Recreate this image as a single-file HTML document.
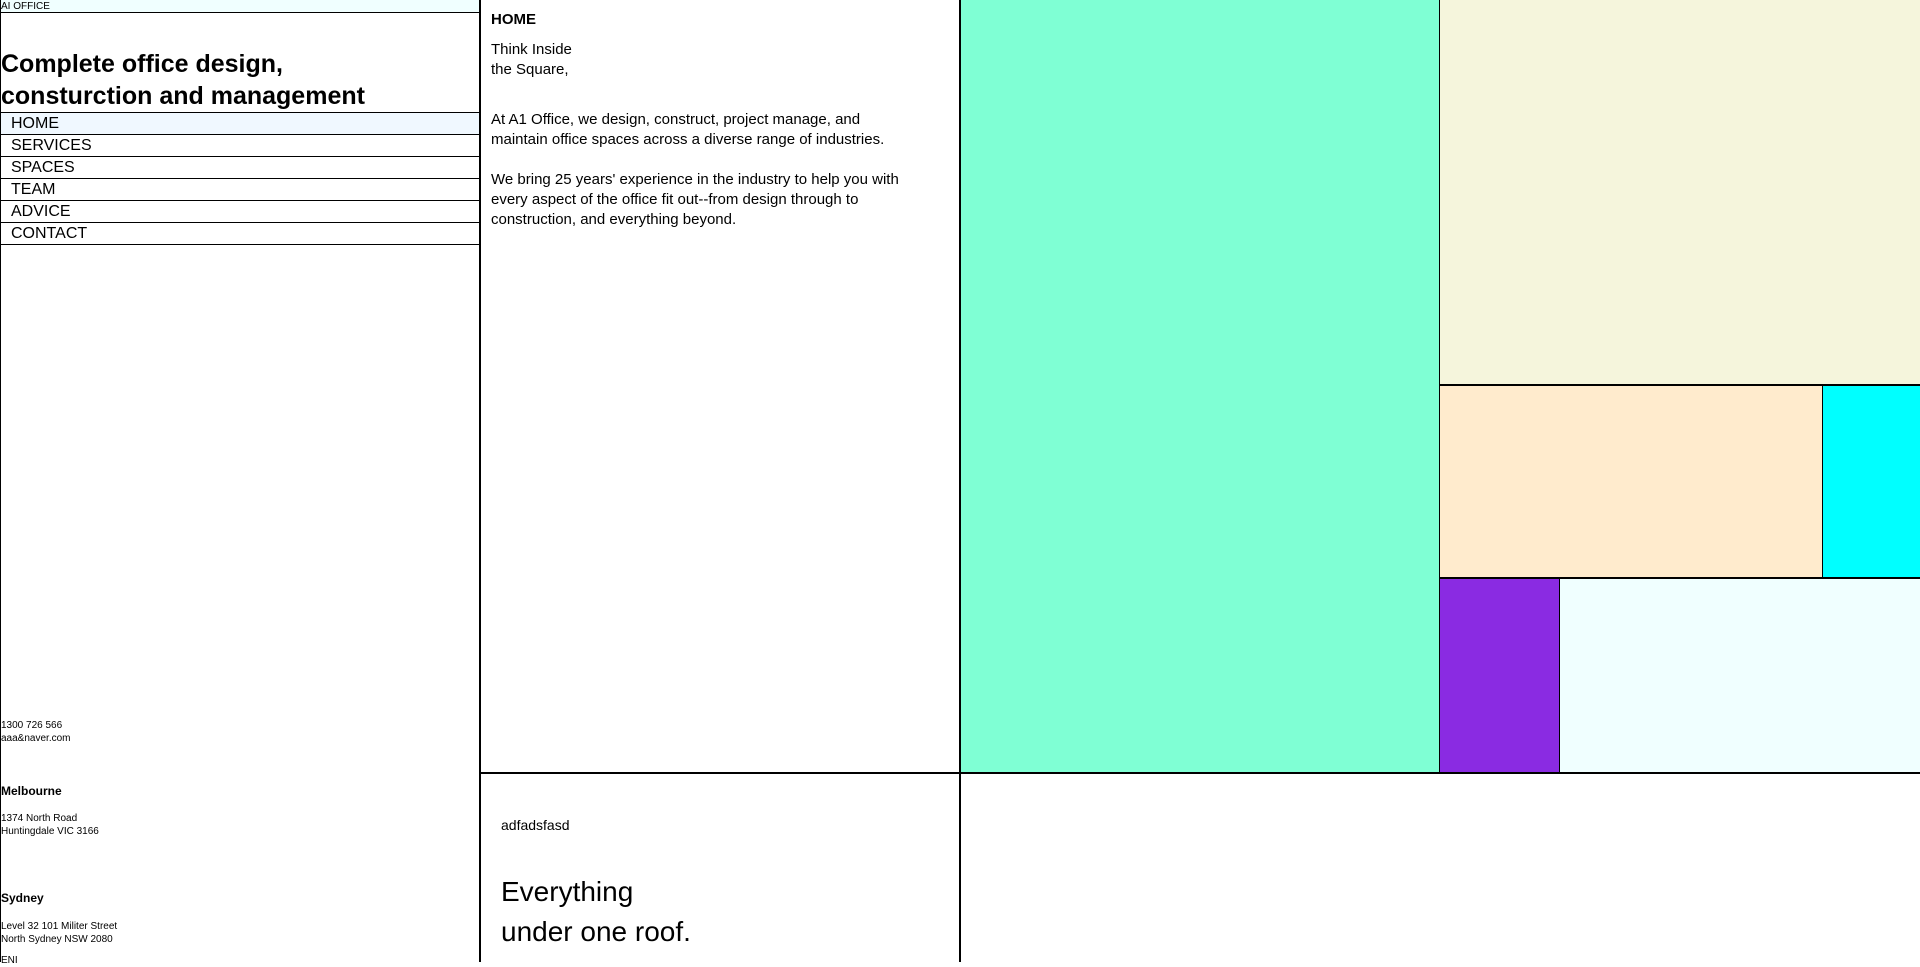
<!DOCTYPE html>
<html><head><meta charset="utf-8"><style>
*{margin:0;padding:0;box-sizing:border-box}
body{width:1920px;height:962px;overflow:hidden;background:#fff;font-family:"Liberation Sans","Noto Sans CJK KR",sans-serif;color:#000;position:relative}
.a{position:absolute}
.nav div{height:22px;border-bottom:1.5px solid #000;font-size:16px;line-height:22px;padding-left:10px}
.sm{font-size:10px;line-height:13px}
.mid{font-size:15px;line-height:20px}
</style></head><body>
<div class="a" style="left:0;top:0;width:481px;height:962px;border-left:1px solid #000;border-right:2px solid #000"></div>
<div class="a sm" style="left:1px;top:0;width:478px;height:13px;background:#f0ffff;border-bottom:1.5px solid #000;line-height:13px;font-size:10px">AI OFFICE</div>
<div class="a" style="left:1px;top:48px;font-size:25px;font-weight:bold;line-height:32px">Complete office design,<br>consturction and management</div>
<div class="a nav" style="left:1px;top:112px;width:478px;border-top:1.5px solid #000">
<div style="background:#f0f8ff">HOME</div><div>SERVICES</div><div>SPACES</div><div>TEAM</div><div>ADVICE</div><div>CONTACT</div></div>
<div class="a sm" style="left:1px;top:719px">1300 726 566<br>aaa&amp;naver.com</div>
<div class="a" style="left:1px;top:784px;font-size:12px;font-weight:bold">Melbourne</div>
<div class="a sm" style="left:1px;top:812px">1374 North Road<br>Huntingdale VIC 3166</div>
<div class="a" style="left:1px;top:891px;font-size:12px;font-weight:bold">Sydney</div>
<div class="a sm" style="left:1px;top:920px">Level 32 101 Militer Street<br>North Sydney NSW 2080</div>
<div class="a sm" style="left:1px;top:954px">ENI</div>

<div class="a" style="left:959px;top:0;width:2px;height:962px;background:#000"></div>
<div class="a" style="left:481px;top:772px;width:1439px;height:2px;background:#000"></div>
<div class="a mid" style="left:491px;top:10px;font-weight:bold">HOME</div>
<div class="a mid" style="left:491px;top:40px">Think Inside<br>the Square,</div>
<div class="a mid" style="left:491px;top:110px">At A1 Office, we design, construct, project manage, and<br>maintain office spaces across a diverse range of industries.</div>
<div class="a mid" style="left:491px;top:170px">We bring 25 years' experience in the industry to help you with<br>every aspect of the office fit out--from design through to<br>construction, and everything beyond.</div>
<div class="a" style="left:501px;top:817px;font-size:14px">adfadsfasd</div>
<div class="a" style="left:501px;top:872px;font-size:28px;line-height:40px">Everything<br>under one roof.</div>

<div class="a" style="left:961px;top:0;width:478px;height:772px;background:#7fffd4"></div>
<div class="a" style="left:1439px;top:0;width:481px;height:772px;background:#000"></div>
<div class="a" style="left:1440px;top:0;width:480px;height:384px;background:#f5f5dc"></div>
<div class="a" style="left:1440px;top:386px;width:382px;height:191px;background:#ffebcd"></div>
<div class="a" style="left:1823px;top:386px;width:97px;height:191px;background:#00ffff"></div>
<div class="a" style="left:1440px;top:579px;width:119px;height:193px;background:#8a2be2"></div>
<div class="a" style="left:1560px;top:579px;width:360px;height:193px;background:#f0ffff"></div>
</body></html>
